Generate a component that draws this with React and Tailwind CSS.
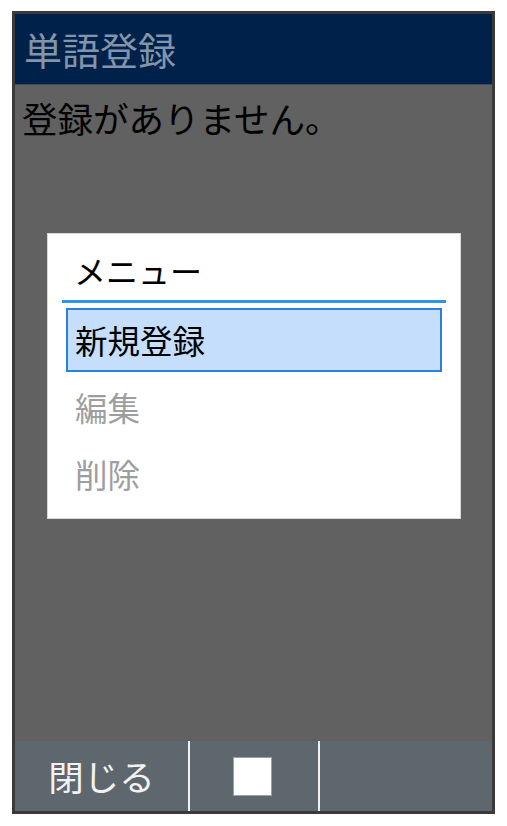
import React from 'react';

const jp = { fontFamily: '"Noto Sans CJK JP", "Noto Sans", sans-serif' };

export default function App() {
  return (
    <div className="w-[507px] h-[826px] bg-white pt-[11px] pl-[12px]" style={jp}>
      <div className="w-[483px] h-[803px] border-[3px] border-[#3a3a3a] bg-[#616161] flex flex-col">
        <div className="h-[71px] bg-[#00224a] border-b border-[#3c4a5c] flex items-center pl-[9px] text-[38px] leading-none text-[#8394ab]">
          単語登録
        </div>

        <div className="flex-1 relative">
          <div className="pl-[7px] pt-[9px] text-[35.5px] leading-[48px] text-black">
            登録がありません。
          </div>

          {/* menu popup */}
          <div className="absolute left-[32px] top-[148px] w-[414px] h-[286px] bg-white border border-[#d8d8d8]">
            <div className="h-[66px] flex items-center pl-[26px] pt-[6px] text-[32px] leading-none text-black">
              メニュー
            </div>
            <div className="mx-[14px] h-[3px] bg-[#2b96ee]" />
            <div className="ml-[18px] mt-[5px] w-[376px] h-[64px] bg-[#c4defc] border-2 border-[#2b7fe0] flex items-center pl-[7px] text-[32.5px] leading-none text-black">
              新規登録
            </div>
            <div className="mt-[2px] h-[67px] flex items-center pl-[27px] text-[32.5px] leading-none text-[#9e9e9e]">
              編集
            </div>
            <div className="h-[67px] flex items-center pl-[27px] text-[32.5px] leading-none text-[#9e9e9e]">
              削除
            </div>
          </div>
        </div>

        <div className="h-[70px] bg-[#5f676e] flex">
          <div className="w-[173px] flex items-center justify-center text-[35.5px] leading-none text-[#f2f2f2]">
            閉じる
          </div>
          <div className="w-[2px] bg-[#f2f2f2]" />
          <div className="w-[128px] flex items-center justify-center">
            <div className="w-[39px] h-[39px] bg-white border border-[#a0a0a0] -ml-[3px]" />
          </div>
          <div className="w-[2px] bg-[#f2f2f2]" />
          <div className="flex-1" />
        </div>
      </div>
    </div>
  );
}
